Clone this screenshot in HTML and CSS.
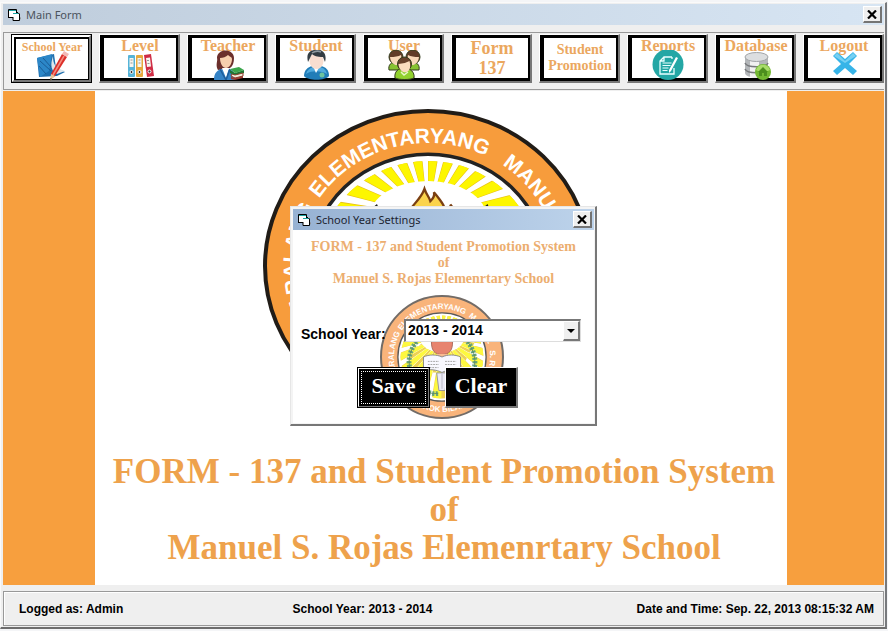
FILE: index.html
```html
<!DOCTYPE html>
<html lang="en">
<head>
<meta charset="utf-8">
<title>Main Form</title>
<link rel="stylesheet" href="styles.css">
</head>
<body>
<svg class="defs" aria-hidden="true">
  <symbol id="form-icon" viewBox="0 0 14 12">
    <path d="M1 1h7v2h3v8H5V9H1z" fill="#fff"/>
    <path d="M1 1.500h7M5 4.500h6" stroke="#1aa3a3" stroke-width="1"/>
    <path d="M.5 9V.5h8V3M.5 8.500H5M8 3.500h2l1.500 1.500v6.500H5V8" stroke="#000" fill="none"/>
    <path d="M12 8l1 1-1 2z" fill="#888"/>
  </symbol>
  <symbol id="close-icon" viewBox="0 0 10 9">
    <path d="M1 .5l8 8M9 .5l-8 8" stroke="#000" stroke-width="2.200"/>
  </symbol>
  <clipPath id="seal-clip"><circle r="94"/></clipPath>
  <symbol id="seal-core" viewBox="-102 -102 204 204" preserveAspectRatio="none">
    <circle r="100" fill="#fff" stroke="#222" stroke-width="3"/>
    <g clip-path="url(#seal-clip)">
      <circle cy="-45" r="80" fill="none" stroke="#e8c21a" stroke-width="160" pathLength="360" stroke-dasharray="9.500 5.500"/>
      <circle cy="-45" r="80" fill="none" stroke="#fdf600" stroke-width="160" pathLength="360" stroke-dasharray="8.300 6.700" stroke-dashoffset="-.6"/>
    </g>
    <ellipse cy="-43" rx="50" ry="33" fill="#fff"/>
    <path d="M-14-36C-24-50-8-54-3-69c2 6 4 7 5 11 3-3 4-5 3-8 8 10 10 14 9 18 5-2 6-4 5-7 8 9 2 17-5 21z" fill="#fbd34c" stroke="#7a3f12" stroke-width="2"/>
    <path d="M-12-40c-8 0-14-4-8-10l8 4zM8-44c5-4 12-7 12-3s-3 7-8 7z" fill="#f18a35"/>
    <path d="M-52-46l8-7 3 8M42-46l8-7 3 8" fill="none" stroke="#222" stroke-width="3"/>
    <path d="M-24-35h48c0 22-8 29-24 29s-24-7-24-29z" fill="#df5b3f" stroke="#85321f" stroke-width="2"/>
    <path d="M-12-7h24v8h-24z" fill="#f6a36c"/>
    <path d="M-42 0C-30-6-12-6 0 0c12-6 30-6 42 0v30c-14-3-30-1-42 5-12-6-28-8-42-5z" fill="#f6f6ff" stroke="#555" stroke-width="2"/>
    <path d="M-32 10h25M7 10h25M-32 17h25M7 17h25M-28 24h20M8 24h20" stroke="#777" stroke-width="2" stroke-dasharray="4 2"/>
    <path d="M-12 36h24L7 76H-7z" fill="#e5e3f2" stroke="#667" stroke-width="2"/>
    <path d="M0 38v34" stroke="#99a" stroke-width="2"/>
    <path d="M-58-35Q-98 20-42 74Q-24 86-8 82M58-35Q98 20 42 74Q24 86 8 82" fill="none" stroke="#34874b" stroke-width="11" stroke-dasharray="5 3"/>
    <path d="M-58-35Q-98 20-42 74Q-24 86-8 82M58-35Q98 20 42 74Q24 86 8 82" fill="none" stroke="#225f35" stroke-width="2"/>
  </symbol>
</svg>

<div class="window">
  <header class="titlebar">
    <svg class="form-icon" aria-hidden="true"><use href="#form-icon"/></svg>
    <h1 class="title">Main Form</h1>
    <button class="close" type="button" aria-label="Close main form"><svg aria-hidden="true"><use href="#close-icon"/></svg></button>
  </header>

  <nav class="toolbar" aria-label="Main">
    <button class="tool focused" type="button"><span class="face"><span class="label small">School Year</span>
      <svg class="icon" viewBox="0 0 36 30" aria-hidden="true">
        <path d="M3 7l17-4 2 14 9 4-8 4-18 1z" fill="#1e6fae"/>
        <path d="M3 7l15-4-3 17-9 6z" fill="#2c87c8"/>
        <path d="M19 5c0 8 2 12 12 15l-8 3c-6-3-7-9-4-18z" fill="#dfe6ea"/>
        <path d="M6 10l11 10M5 15l7 8M9 7l8 9" stroke="#1a5c96" stroke-width="1"/>
        <path d="M28 3l5 3-12 19-4 3 0-5z" fill="#dc2f29"/>
        <path d="M30 5L19 24" stroke="#f58c80" stroke-width="1.500"/>
        <path d="M28 3l2-3 5 3-2 3z" fill="#f3b9b4"/>
        <path d="M17 23l4 2-5 5z" fill="#e8c69a"/><path d="M16.500 27l1.500 1-2 2z" fill="#333"/>
      </svg></span></button>
    <button class="tool" type="button"><span class="face"><span class="label">Level</span>
      <svg class="icon" viewBox="0 0 36 30" aria-hidden="true">
        <rect x="6" y="5" width="7" height="22" rx="1" fill="#56b4d8"/><rect x="14" y="5" width="7" height="22" rx="1" fill="#e6a93c"/>
        <path d="M22 5l7-1 3 22-7 1z" fill="#cf2d45"/>
        <path d="M7.500 8h4v9h-4zM15.500 8h4v9h-4zM24 8l4-.5 1 9-4 .5z" fill="#f6f6f0"/>
        <path d="M8.500 10h2M8.500 13h2M16.500 10h2M16.500 13h2M25 10.500h2M25.500 13.500h2" stroke="#999"/>
        <g fill="#333" stroke="#fff"><circle cx="9.500" cy="22" r="1.500"/><circle cx="17.500" cy="22" r="1.500"/><circle cx="27.500" cy="21.500" r="1.500"/></g>
      </svg></span></button>
    <button class="tool" type="button"><span class="face"><span class="label">Teacher</span>
      <svg class="icon" viewBox="0 0 36 30" aria-hidden="true">
        <path d="M8 20C5 15 8 11 7 8c0-10 17-10 17 0 0 4-1 8-4 10z" fill="#6b2f2c"/>
        <path d="M10 8c3 0 6-1 8-3 2 2 4 2 4 4 0 5-3 9-6 9s-6-4-6-10z" fill="#f7cfae"/>
        <path d="M4 30c0-8 4-10 8-11l4 3 3-3c4 1 6 4 6 11z" fill="#3583c6"/>
        <path d="M12 18h7l-3 10z" fill="#fff"/><path d="M10 19l6 11 4-11" fill="none" stroke="#1e5d9b" stroke-width="1.500"/>
        <path d="M20 19l9-2 5 3-9 3z" fill="#3aa64c"/><path d="M20 20l5 3 9-3v3l-9 3-5-3z" fill="#1f7733"/>
        <path d="M22 24l3 1 8-2v3l-8 2-4-2z" fill="#f2ecdc" stroke="#8b3b2b"/>
        <path d="M21 27l4 1 8-2v2l-8 2-4-1z" fill="#993b32"/>
      </svg></span></button>
    <button class="tool" type="button"><span class="face"><span class="label">Student</span>
      <svg class="icon" viewBox="0 0 36 30" aria-hidden="true">
        <path d="M6 26c0-6 4-9 8-10h9c5 1 8 4 8 10-4 5-21 5-25 0z" fill="#217db8"/>
        <path d="M8 24c1-4 4-6 7-7l3 4 4-4c4 1 6 3 7 7-5-3-15-4-21 0z" fill="#51aadd"/>
        <path d="M15 16h7l-4 7z" fill="#fff"/>
        <ellipse cx="18.500" cy="11" rx="7" ry="8" fill="#f8ded0"/>
        <path d="M10 12C8 4 11 0 18 0c8-1 11 5 9 12l-2-5c-6 0-9-1-11-3z" fill="#333c42"/>
        <path d="M14 3c3-2 7-2 9-1" stroke="#8d989e" stroke-width="1.500" fill="none"/>
        <circle cx="24" cy="25" r="2.500" fill="#6cc4a0"/>
      </svg></span></button>
    <button class="tool" type="button"><span class="face"><span class="label">User</span>
      <svg class="icon" viewBox="0 0 36 30" aria-hidden="true">
        <g stroke="#333b1c" stroke-width="1">
          <path d="M3 20c-1-5 2-8 7-8s8 3 7 8zM19 20c-1-5 2-8 7-8s8 3 7 8z" fill="#87c232"/>
          <circle cx="10" cy="7" r="7" fill="#613c28"/><circle cx="27" cy="7" r="7" fill="#613c28"/>
        </g>
        <path d="M4 7q7 0 11-2c3 13-10 13-11 2zM22 5q4 2 11 2c-1 11-14 11-11-2z" fill="#f8d8b8"/>
        <g stroke="#333b1c" stroke-width="1"><path d="M9 28c-1-6 3-10 9-10s11 4 10 10c-4 2-15 2-19 0z" fill="#91d12e"/>
        <circle cx="18.500" cy="14" r="7" fill="#68412b"/></g>
        <path d="M12.500 14q6 0 11-3c4 14-10 15-11 3z" fill="#fbdcbe"/>
        <path d="M15 22l3 3 4-3" fill="none" stroke="#e8f7c6" stroke-width="1.500"/>
      </svg></span></button>
    <button class="tool" type="button"><span class="face middle"><span class="label large">Form<br>137</span></span></button>
    <button class="tool" type="button"><span class="face middle"><span class="label medium">Student<br>Promotion</span></span></button>
    <button class="tool" type="button"><span class="face"><span class="label">Reports</span>
      <svg class="icon" viewBox="0 0 36 30" aria-hidden="true">
        <circle cx="18" cy="14.500" r="15.500" fill="#24a7a5"/>
        <path d="M22 7H14l-4 4v13h14v-6M14 7v4h-4M22 7v2" fill="none" stroke="#e9ffff" stroke-width="1.300"/>
        <path d="M12.500 13h9M12.500 15.500h8M12.500 18h6M12.500 20.500h5" stroke="#e9ffff"/>
        <path d="M26 7l2 1-7 13-2 2v-3z" fill="#fff"/>
      </svg></span></button>
    <button class="tool" type="button"><span class="face"><span class="label">Database</span>
      <svg class="icon" viewBox="0 0 36 30" aria-hidden="true">
        <path d="M7 7v16c0 6 23 6 23 0V7z" fill="#b4b7ba"/><path d="M12 10v17c4 1 7 1 9 0V10z" fill="#f1f1f1"/>
        <path d="M7 13c2 5 21 5 23 0M7 19c2 5 21 5 23 0" fill="none" stroke="#77797c" stroke-width="1.500"/>
        <ellipse cx="18.500" cy="7" rx="11.500" ry="4.500" fill="#dcdee0" stroke="#a2a5a8"/>
        <circle cx="25" cy="22" r="8" fill="#72b832"/><path d="M18 20c2-7 12-7 14 0-4 2-10 2-14 0z" fill="#a8dc6a"/>
        <path d="M20 22l5-5 5 5h-1v4h-3v-3h-2v3h-3v-4z" fill="#4c8f1e"/>
      </svg></span></button>
    <button class="tool" type="button"><span class="face"><span class="label">Logout</span>
      <svg class="icon" viewBox="0 0 36 30" aria-hidden="true">
        <path d="M11 2l8 7 8-7 4 4-8 8 8 7-4 4-8-7-8 7-4-4 8-7-8-8z" fill="#37b4e8"/>
        <path d="M11 3l8 8 8-8 3 3-11 7L8 6z" fill="#76d0f3"/>
      </svg></span></button>
  </nav>

  <main class="stage">
    <div class="poster">
      <svg class="seal" viewBox="0 0 332 316" role="img" aria-label="School seal">
        <path id="ring-main" d="M166 281A130 123 0 0 1 166 35A130 123 0 0 1 166 281" fill="none"/>
        <ellipse cx="166" cy="158" rx="163" ry="155" fill="#f79c3c" stroke="#211c17" stroke-width="4"/>
        <use href="#seal-core" x="46" y="44" width="240" height="228"/>
        <g class="ring-text">
          <text><textPath href="#ring-main" startOffset="24.500%">PAARALANG</textPath></text>
          <text><textPath href="#ring-main" startOffset="45.800%">ELEMENTARYANG</textPath></text>
          <text><textPath href="#ring-main" startOffset="65.500%">MANUEL</textPath></text>
        </g>
      </svg>
      <p class="headline">FORM - 137 and Student Promotion System<br>of<br>Manuel S. Rojas Elemenrtary School</p>
    </div>

    <section class="dialog" role="dialog" aria-labelledby="dialog-title">
      <header class="titlebar active">
        <svg class="form-icon" aria-hidden="true"><use href="#form-icon"/></svg>
        <h2 class="title" id="dialog-title">School Year Settings</h2>
        <button class="close" type="button" aria-label="Close settings"><svg aria-hidden="true"><use href="#close-icon"/></svg></button>
      </header>
      <form class="dialog-body">
        <svg class="watermark" viewBox="0 0 124 124" aria-hidden="true">
          <path id="ring-small" d="M62 110A48 48 0 0 1 62 14A48 48 0 0 1 62 110" fill="none"/>
          <path id="ring-under" d="M7 62A55 55 0 0 0 117 62" fill="none"/>
          <circle cx="62" cy="62" r="61" fill="#f79c50" stroke="#443b35" stroke-width="2"/>
          <use href="#seal-core" x="17" y="17" width="90" height="90"/>
          <g class="ring-text small-ring">
            <text><textPath href="#ring-small" startOffset="25%">PAARALANG</textPath></text>
            <text><textPath href="#ring-small" startOffset="46%">ELEMENTARYANG</textPath></text>
            <text><textPath href="#ring-small" startOffset="65%">MANUEL</textPath></text>
            <text><textPath href="#ring-small" startOffset="79%">S. ROJAS</textPath></text>
            <text><textPath href="#ring-under" startOffset="50%">BAROK BILANG</textPath></text>
          </g>
        </svg>
        <p class="dialog-heading">FORM - 137 and Student Promotion System<br>of<br>Manuel S. Rojas Elemenrtary School</p>
        <div class="field">
          <label for="school-year">School Year:</label>
          <div class="combo">
            <select id="school-year"><option>2013 - 2014</option></select>
            <span class="arrow" aria-hidden="true"></span>
          </div>
        </div>
        <div class="actions">
          <button class="action default" type="button">Save</button>
          <button class="action" type="button">Clear</button>
        </div>
      </form>
    </section>
  </main>

  <footer class="status">
    <span>Logged as: Admin</span>
    <span>School Year: 2013 - 2014</span>
    <span class="clock">Date and Time: Sep. 22, 2013 08:15:32 AM</span>
  </footer>
</div>
</body>
</html>
```
FILE: styles.css
```css
* { box-sizing: border-box; }

body {
  margin: 0;
  padding: 2px 1px 2px 0;
  min-height: 100vh;
  display: flex;
  background: #f4f5f7;
  font-family: "Liberation Sans", sans-serif;
  color: #000;
}

button, select { font: inherit; color: inherit; padding: 0; border-radius: 0; }

.defs { position: absolute; width: 0; height: 0; }

.window {
  flex: 1;
  display: flex;
  flex-direction: column;
  min-width: 0;
  padding: 1px 1px 1px 2px;
  background: #efefef;
  border: 1px solid #fafafa;
  border-right: 2px solid #77797c;
  border-bottom: 2px solid #6d6d6d;
}

.titlebar {
  display: flex;
  align-items: center;
  height: 21px;
  padding: 0 2px 0 5px;
  background: linear-gradient(90deg, #bfcddc, #d7e5f3);
  color: #4b535c;
}

.form-icon { width: 14px; height: 12px; }

.title {
  flex: 1;
  margin: 0 0 0 4px;
  font: 11px/20px "Noto Sans", sans-serif;
}

.close {
  display: grid;
  place-items: center;
  width: 19px;
  height: 17px;
  background: #efefef;
  border: 1px solid #fff;
  border-right: 2px solid #747474;
  border-bottom: 2px solid #747474;
}

.close svg { width: 10px; height: 9px; }

.toolbar {
  display: grid;
  grid-template-columns: repeat(10, minmax(0, 1fr));
  gap: 7px;
  margin: 7px 0 1px;
  padding: 1px 0 6px 7px;
  border: 1px solid #999;
  border-right-width: 0;
}

.tool {
  height: 49px;
  padding: 3px 2px 3px 4px;
  background: #000;
  border: 1px solid #fff;
  border-right: 2px solid #777;
  border-bottom: 2px solid #777;
}

.tool.focused {
  outline: 1px solid #000;
  outline-offset: -1px;
  border-width: 3px;
  border-color: #fff #777 #777 #fff;
  padding: 1px 1px 1px 2px;
}

.face {
  display: flex;
  flex-direction: column;
  align-items: center;
  height: 40px;
  background: #fff;
}

.middle { justify-content: center; }

.label {
  font: bold 16px/16px "Liberation Serif", serif;
  color: #eba75e;
  white-space: nowrap;
}

.small { font-size: 12px; }
.medium { font-size: 14px; }
.large { font-size: 18px; line-height: 20px; }

.icon {
  flex: none;
  width: 36px;
  height: 30px;
  margin-top: -4px;
}

.stage {
  position: relative;
  flex: 1;
  padding: 0 11% 0 92px;
  background: #f79f3e;
}

.poster {
  display: flex;
  flex-direction: column;
  align-items: center;
  height: 100%;
  padding-top: 17px;
  background: #fff;
}

.seal { width: 332px; height: 316px; margin-right: 27px; }

.ring-text {
  font: bold 21px "Liberation Sans", sans-serif;
  fill: #fff;
  text-anchor: middle;
}

.small-ring { font-size: 8px; }

.headline {
  margin: 29px 0 14px;
  padding-left: 6px;
  font: bold 35px/38px "Liberation Serif", serif;
  color: #eea24c;
  text-align: center;
  white-space: nowrap;
}

.dialog {
  position: absolute;
  top: 115px;
  left: 0;
  right: 0;
  width: 307px;
  margin: 0 auto;
  padding: 2px 1px 1px 2px;
  background: #f4f4f4;
  border: 1px solid #e6e6e6;
  border-right: 2px solid #777;
  border-bottom: 2px solid #777;
}

.active {
  background: linear-gradient(90deg, #97b2d3, #bdd3eb);
  color: #1c2430;
}

.dialog-body {
  position: relative;
  padding: 9px 13px 15px 8px;
  background: #fff;
}

.watermark {
  position: absolute;
  top: 65px;
  left: 87px;
  width: 124px;
  height: 124px;
  opacity: 0.75;
}

.dialog-heading {
  position: relative;
  margin: 0 0 32px 5px;
  font: bold 14px/16px "Liberation Serif", serif;
  color: #ecae70;
  text-align: center;
  white-space: nowrap;
}

.field {
  position: relative;
  display: flex;
  align-items: flex-end;
  justify-content: space-between;
  height: 23px;
  font-size: 14px;
  font-weight: bold;
}

.field label { line-height: 16px; }

.combo { position: relative; width: 177px; height: 23px; }

.combo select {
  appearance: none;
  width: 100%;
  height: 100%;
  padding: 0 20px 2px 2px;
  background: #fff;
  border: 2px solid #777;
  border-right: 1px solid #ddd;
  border-bottom: 1px solid #ddd;
}

.arrow {
  position: absolute;
  top: 2px;
  right: 1px;
  bottom: 1px;
  width: 17px;
  display: grid;
  place-items: center;
  background: #efefef;
  border: 1px solid #fff;
  border-right: 2px solid #777;
  border-bottom: 2px solid #777;
  pointer-events: none;
}

.arrow::before {
  content: "";
  border: 4px solid transparent;
  border-top-color: #000;
  border-bottom: 0;
}

.actions {
  position: relative;
  display: flex;
  justify-content: center;
  gap: 15px;
  margin: 25px 7px 0 0;
}

.action {
  width: 73px;
  height: 41px;
  padding-bottom: 3px;
  background: #000;
  border: 1px solid #fff;
  border-right: 2px solid #777;
  border-bottom: 2px solid #777;
  font: bold 22px/24px "Liberation Serif", serif;
  color: #fff;
}

.action.default {
  border-width: 2px;
  outline: 1px solid #000;
  outline-offset: -1px;
  box-shadow: inset 0 0 0 1px #000;
  background:
    repeating-linear-gradient(90deg, #fff 0 1px, #000 1px 2px) 2px 2px / calc(100% - 4px) 1px no-repeat,
    repeating-linear-gradient(90deg, #fff 0 1px, #000 1px 2px) 2px calc(100% - 2px) / calc(100% - 4px) 1px no-repeat,
    repeating-linear-gradient(#fff 0 1px, #000 1px 2px) 2px 2px / 1px calc(100% - 4px) no-repeat,
    repeating-linear-gradient(#fff 0 1px, #000 1px 2px) calc(100% - 2px) 2px / 1px calc(100% - 4px) no-repeat,
    #000;
}

.status {
  display: grid;
  grid-template-columns: 32% 1fr auto;
  align-items: center;
  height: 35px;
  margin: 6px 0 0;
  padding: 0 9px 0 15px;
  border: 1px solid #999;
  box-shadow: inset 1px 1px #fff;
  font-size: 12px;
  font-weight: bold;
}

.clock { text-align: right; }
```
